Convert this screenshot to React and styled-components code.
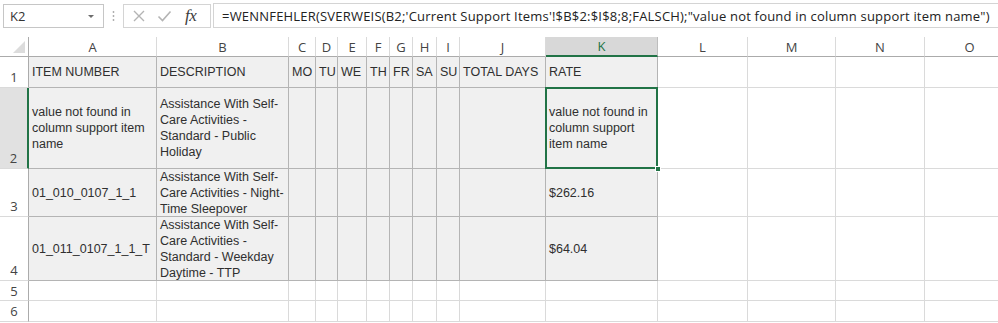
import React from 'react';
import styled, { createGlobalStyle, css } from 'styled-components';

const GlobalStyle = createGlobalStyle`
  html, body { margin: 0; padding: 0; background: #ffffff; }
  body { font-family: "Liberation Sans", Arial, sans-serif; }
  *, *::before, *::after { box-sizing: border-box; }
`;

const Page = styled.div`
  width: 998px;
  height: 323px;
  overflow: hidden;
  background: #ffffff;
`;

const Toolbar = styled.div`
  display: flex;
  align-items: flex-start;
  height: 37px;
  padding: 4px 0 0 3px;
`;

const NameBox = styled.div`
  width: 101px;
  height: 24px;
  border: 1px solid #c6c6c6;
  display: flex;
  align-items: center;
  justify-content: space-between;
  padding: 0 9px 0 6px;
  font-family: "Open Sans", "Noto Sans", sans-serif;
  font-size: 13px;
  color: #333;
`;

const Caret = styled.span`
  width: 0;
  height: 0;
  border-left: 3px solid transparent;
  border-right: 3px solid transparent;
  border-top: 3px solid #6d6d6d;
`;

const Grip = styled.div`
  width: 19px;
  height: 24px;
  display: flex;
  align-items: center;
  justify-content: center;
`;

const FxGroup = styled.div`
  width: 88px;
  height: 24px;
  border: 1px solid #d4d4d4;
  display: flex;
  align-items: center;
  padding-left: 8px;
  gap: 11px;
`;

const FxLabel = styled.span`
  font-family: "Liberation Serif", "DejaVu Serif", serif;
  font-style: italic;
  font-size: 17px;
  color: #3c3c3c;
  margin-left: 2px;
  letter-spacing: -0.5px;
`;

const FormulaInput = styled.div`
  flex: 1;
  height: 25px;
  margin-left: 2px;
  margin-top: -1px;
  border: 1px solid #d4d4d4;
  border-right: none;
  display: flex;
  align-items: center;
  padding-left: 8px;
  font-family: "Open Sans", "Noto Sans", sans-serif;
  font-size: 13px;
  letter-spacing: 0.2px;
  color: #222;
  white-space: nowrap;
  overflow: hidden;
`;

const Sheet = styled.div`
  display: grid;
  grid-template-columns: ${p => p.$cols};
  grid-template-rows: ${p => p.$rows};
`;

const Corner = styled.div`
  position: relative;
  background: #fff;
  border-right: 1px solid #ababab;
  border-bottom: 1px solid #ababab;
  display: flex;
  align-items: flex-end;
  justify-content: flex-end;
  padding: 0 3px 3px 0;
`;

const CornerTri = styled.span`
  width: 0;
  height: 0;
  border-left: 12px solid transparent;
  border-bottom: 12px solid #dcdcdc;
`;

const ColHead = styled.div`
  background: #ffffff;
  border-right: 1px solid #dadada;
  border-bottom: 1px solid #ababab;
  display: flex;
  align-items: center;
  justify-content: center;
  font-family: "Open Sans", "Noto Sans", sans-serif;
  font-size: 13px;
  color: #444;
  ${p => p.$sel && css`
    background: #d8d8d8;
    color: #217346;
    border-right-color: #bdbdbd;
    border-bottom: 2px solid #217346;
  `}
`;

const RowHead = styled.div`
  background: #ffffff;
  border-right: 1px solid #ababab;
  border-bottom: 1px solid #dadada;
  display: flex;
  align-items: ${p => (p.$short ? 'center' : 'flex-end')};
  justify-content: center;
  padding-bottom: ${p => (p.$short ? '0' : '1px')};
  font-family: "Open Sans", "Noto Sans", sans-serif;
  font-size: 13px;
  color: #444;
  ${p => p.$sel && css`
    background: #e1e1e1;
    border-right: 2px solid #217346;
  `}
`;

const Cell = styled.div`
  position: relative;
  background: ${p => (p.$data ? '#f0f0f0' : '#ffffff')};
  border-right: 1px solid ${p => (p.$data ? '#b4b4b4' : '#dadada')};
  border-bottom: 1px solid ${p => (p.$data ? '#b4b4b4' : '#dadada')};
  display: flex;
  align-items: center;
  padding: 0 2px 0 3px;
  font-family: "Liberation Sans", Arial, sans-serif;
  font-size: 12.5px;
  line-height: 16px;
  color: #2f2f2f;
  white-space: nowrap;
  ${p => p.$sel && css`
    &::after {
      content: '';
      position: absolute;
      left: -1px;
      top: -1px;
      right: -1px;
      bottom: -1px;
      border: 2px solid #217346;
      pointer-events: none;
    }
    &::before {
      content: '';
      position: absolute;
      right: -4px;
      bottom: -4px;
      width: 6px;
      height: 6px;
      background: #217346;
      border: 1px solid #ffffff;
      z-index: 2;
    }
  `}
`;

const Lines = styled.div`
  display: flex;
  flex-direction: column;
`;

const Line = styled.span`
  display: block;
`;

const columns = [
  { key: 'A', w: 128 }, { key: 'B', w: 132 }, { key: 'C', w: 27 }, { key: 'D', w: 22 },
  { key: 'E', w: 29 }, { key: 'F', w: 23 }, { key: 'G', w: 23 }, { key: 'H', w: 24 },
  { key: 'I', w: 23 }, { key: 'J', w: 86 }, { key: 'K', w: 112 }, { key: 'L', w: 90 },
  { key: 'M', w: 88 }, { key: 'N', w: 89 }, { key: 'O', w: 90 },
];

const rowHeights = [31, 81, 48, 64, 20, 21];

const data = {
  1: { A: 'ITEM NUMBER', B: 'DESCRIPTION', C: 'MO', D: 'TU', E: 'WE', F: 'TH', G: 'FR', H: 'SA', I: 'SU', J: 'TOTAL DAYS', K: 'RATE' },
  2: {
    A: ['value not found in', 'column support item', 'name'],
    B: ['Assistance With Self-', 'Care Activities -', 'Standard - Public', 'Holiday'],
    K: ['value not found in', 'column support', 'item name'],
  },
  3: {
    A: '01_010_0107_1_1',
    B: ['Assistance With Self-', 'Care Activities - Night-', 'Time Sleepover'],
    K: '$262.16',
  },
  4: {
    A: '01_011_0107_1_1_T',
    B: ['Assistance With Self-', 'Care Activities -', 'Standard - Weekday', 'Daytime - TTP'],
    K: '$64.04',
  },
};

const dataCols = 'ABCDEFGHIJK';

function CloseIcon() {
  return (
    <svg width="14" height="14" viewBox="0 0 14 14">
      <path d="M2 2 L12 12 M12 2 L2 12" stroke="#b4b4b4" strokeWidth="1.4" fill="none" />
    </svg>
  );
}

function CheckIcon() {
  return (
    <svg width="15" height="14" viewBox="0 0 15 14">
      <path d="M1.5 7.5 L5.5 11.5 L13.5 2.5" stroke="#b4b4b4" strokeWidth="1.6" fill="none" />
    </svg>
  );
}

function GripIcon() {
  return (
    <svg width="3" height="12" viewBox="0 0 3 12">
      <circle cx="1.5" cy="2" r="0.9" fill="#a8a8a8" />
      <circle cx="1.5" cy="6" r="0.9" fill="#a8a8a8" />
      <circle cx="1.5" cy="10" r="0.9" fill="#a8a8a8" />
    </svg>
  );
}

function CellContent({ value }) {
  if (!value) return null;
  if (Array.isArray(value)) {
    return (
      <Lines>
        {value.map((l, i) => <Line key={i}>{l}</Line>)}
      </Lines>
    );
  }
  return <span>{value}</span>;
}

export default function App() {
  const cols = ['29px', ...columns.map(c => `${c.w}px`)].join(' ');
  const rows = ['20px', ...rowHeights.map(h => `${h}px`)].join(' ');
  return (
    <Page>
      <GlobalStyle />
      <Toolbar>
        <NameBox>
          <span>K2</span>
          <Caret />
        </NameBox>
        <Grip><GripIcon /></Grip>
        <FxGroup>
          <CloseIcon />
          <CheckIcon />
          <FxLabel>fx</FxLabel>
        </FxGroup>
        <FormulaInput>
          =WENNFEHLER(SVERWEIS(B2;'Current Support Items'!$B$2:$I$8;8;FALSCH);"value not found in column support item name")
        </FormulaInput>
      </Toolbar>
      <Sheet $cols={cols} $rows={rows}>
        <Corner><CornerTri /></Corner>
        {columns.map(c => (
          <ColHead key={c.key} $sel={c.key === 'K'}>{c.key}</ColHead>
        ))}
        {rowHeights.map((h, ri) => {
          const r = ri + 1;
          const rowData = data[r] || {};
          return (
            <React.Fragment key={r}>
              <RowHead $sel={r === 2} $short={h <= 21}>{r}</RowHead>
              {columns.map(c => (
                <Cell
                  key={c.key}
                  $data={r <= 4 && dataCols.includes(c.key)}
                  $sel={r === 2 && c.key === 'K'}
                >
                  <CellContent value={rowData[c.key]} />
                </Cell>
              ))}
            </React.Fragment>
          );
        })}
      </Sheet>
    </Page>
  );
}
